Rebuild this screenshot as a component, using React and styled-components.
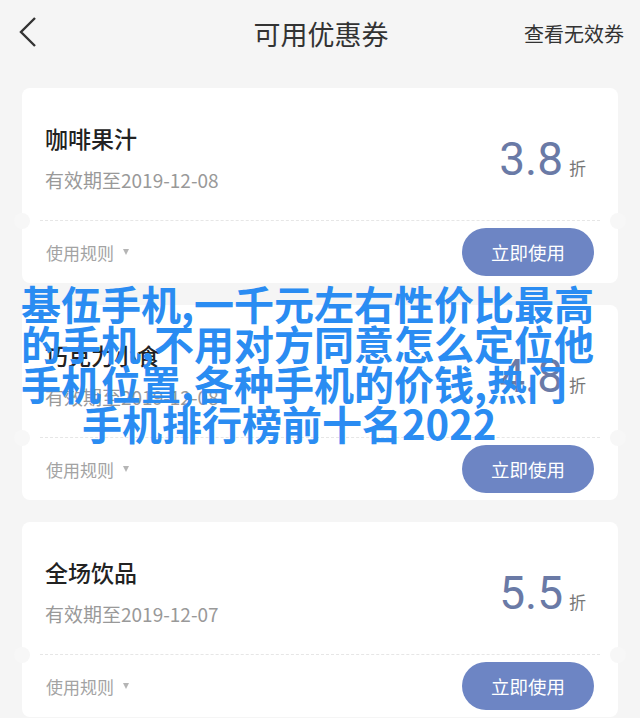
import React from 'react';
import styled, { createGlobalStyle } from 'styled-components';

const GlobalStyle = createGlobalStyle`
  body {
    margin: 0;
    background: #f5f5f5;
    font-family: "Noto Sans CJK SC", "Noto Sans", sans-serif;
  }
`;

const Page = styled.div`
  position: relative;
  width: 640px;
  height: 718px;
  overflow: hidden;
  background: #f5f5f5;
`;

const Header = styled.div`
  display: grid;
  grid-template-columns: 1fr auto 1fr;
  align-items: center;
  height: 64px;
  padding: 0 16px 0 18px;
`;

const BackButton = styled.button`
  all: unset;
  display: flex;
  align-items: center;
  justify-self: start;
  cursor: pointer;
`;

const Title = styled.h1`
  margin: 0;
  font-size: 27px;
  font-weight: 400;
  color: #333;
  line-height: 1;
  padding-top: 2px;
`;

const HeaderLink = styled.a`
  justify-self: end;
  font-size: 20px;
  color: #333;
  text-decoration: none;
  padding-top: 2px;
`;

const List = styled.div`
  display: flex;
  flex-direction: column;
  gap: 22px;
  padding: 24px 22px 0;
`;

const Card = styled.div`
  background: #fff;
  border-radius: 8px;
  height: 195px;
  display: flex;
  flex-direction: column;
`;

const CardTop = styled.div`
  height: 132px;
  box-sizing: border-box;
  display: flex;
  justify-content: space-between;
  align-items: flex-start;
  padding: 35px 32px 0 23px;
`;

const Info = styled.div`
  display: flex;
  flex-direction: column;
  gap: 14px;
`;

const Name = styled.div`
  font-size: 23px;
  line-height: 30px;
  font-weight: 500;
  color: #222;
`;

const Expiry = styled.div`
  font-size: 19px;
  line-height: 26px;
  color: #999;
`;

const Price = styled.div`
  display: flex;
  align-items: baseline;
  margin-top: 13px;
`;

const Amount = styled.span`
  font-family: Roboto, "Liberation Sans", sans-serif;
  font-size: 46px;
  line-height: 46px;
  color: #6a7aa6;
`;

const Unit = styled.span`
  font-size: 17px;
  color: #777;
  margin-left: 6px;
`;

const Divider = styled.div`
  position: relative;
  margin: 0 18px;
  border-top: 1px dashed #e6e6e6;

  &::before,
  &::after {
    content: '';
    position: absolute;
    top: -8px;
    width: 16px;
    height: 16px;
    border-radius: 50%;
    background: #f7f7f7;
  }
  &::before { left: -26px; }
  &::after { right: -26px; }
`;

const CardBottom = styled.div`
  flex: 1;
  display: flex;
  justify-content: space-between;
  align-items: center;
  padding: 0 24px 0 24px;
`;

const Rules = styled.div`
  display: flex;
  align-items: center;
  gap: 9px;
  font-size: 17px;
  color: #a3a3a3;
`;

const Caret = styled.span`
  width: 0;
  height: 0;
  border-left: 3.5px solid transparent;
  border-right: 3.5px solid transparent;
  border-top: 6px solid #b5b5b5;
`;

const UseButton = styled.button`
  all: unset;
  width: 132px;
  height: 48px;
  border-radius: 24px;
  background: #6d85c4;
  color: #fff;
  font-size: 18.5px;
  text-align: center;
  line-height: 48px;
`;

const Watermark = styled.div`
  position: absolute;
  left: 21px;
  top: 283px;
  font-size: 40px;
  line-height: 40px;
  font-weight: 700;
  color: #2a8cf2;
  pointer-events: none;
  white-space: nowrap;
`;

const WatermarkLine = styled.div`
  padding-left: ${p => p.indent || 0}px;
`;

const coupons = [
  { name: '咖啡果汁', date: '2019-12-08', amount: '3.8' },
  { name: '巧克力小食', date: '2019-12-08', amount: '4.8' },
  { name: '全场饮品', date: '2019-12-07', amount: '5.5' },
];

const watermark = [
  '基伍手机,一千元左右性价比最高',
  '的手机,不用对方同意怎么定位他',
  '手机位置,各种手机的价钱,热门',
];

export default function App() {
  return (
    <Page>
      <GlobalStyle />
      <Header>
        <BackButton>
          <svg width="20" height="32" viewBox="0 0 20 32">
            <polyline points="17,2 3,16 17,30" fill="none" stroke="#333" strokeWidth="2.4" />
          </svg>
        </BackButton>
        <Title>可用优惠券</Title>
        <HeaderLink href="#">查看无效券</HeaderLink>
      </Header>
      <List>
        {coupons.map(c => (
          <Card key={c.name}>
            <CardTop>
              <Info>
                <Name>{c.name}</Name>
                <Expiry>有效期至{c.date}</Expiry>
              </Info>
              <Price>
                <Amount>{c.amount}</Amount>
                <Unit>折</Unit>
              </Price>
            </CardTop>
            <Divider />
            <CardBottom>
              <Rules>使用规则<Caret /></Rules>
              <UseButton>立即使用</UseButton>
            </CardBottom>
          </Card>
        ))}
      </List>
      <Watermark>
        {watermark.map(l => <WatermarkLine key={l}>{l}</WatermarkLine>)}
        <WatermarkLine indent={61}>手机排行榜前十名2022</WatermarkLine>
      </Watermark>
    </Page>
  );
}
